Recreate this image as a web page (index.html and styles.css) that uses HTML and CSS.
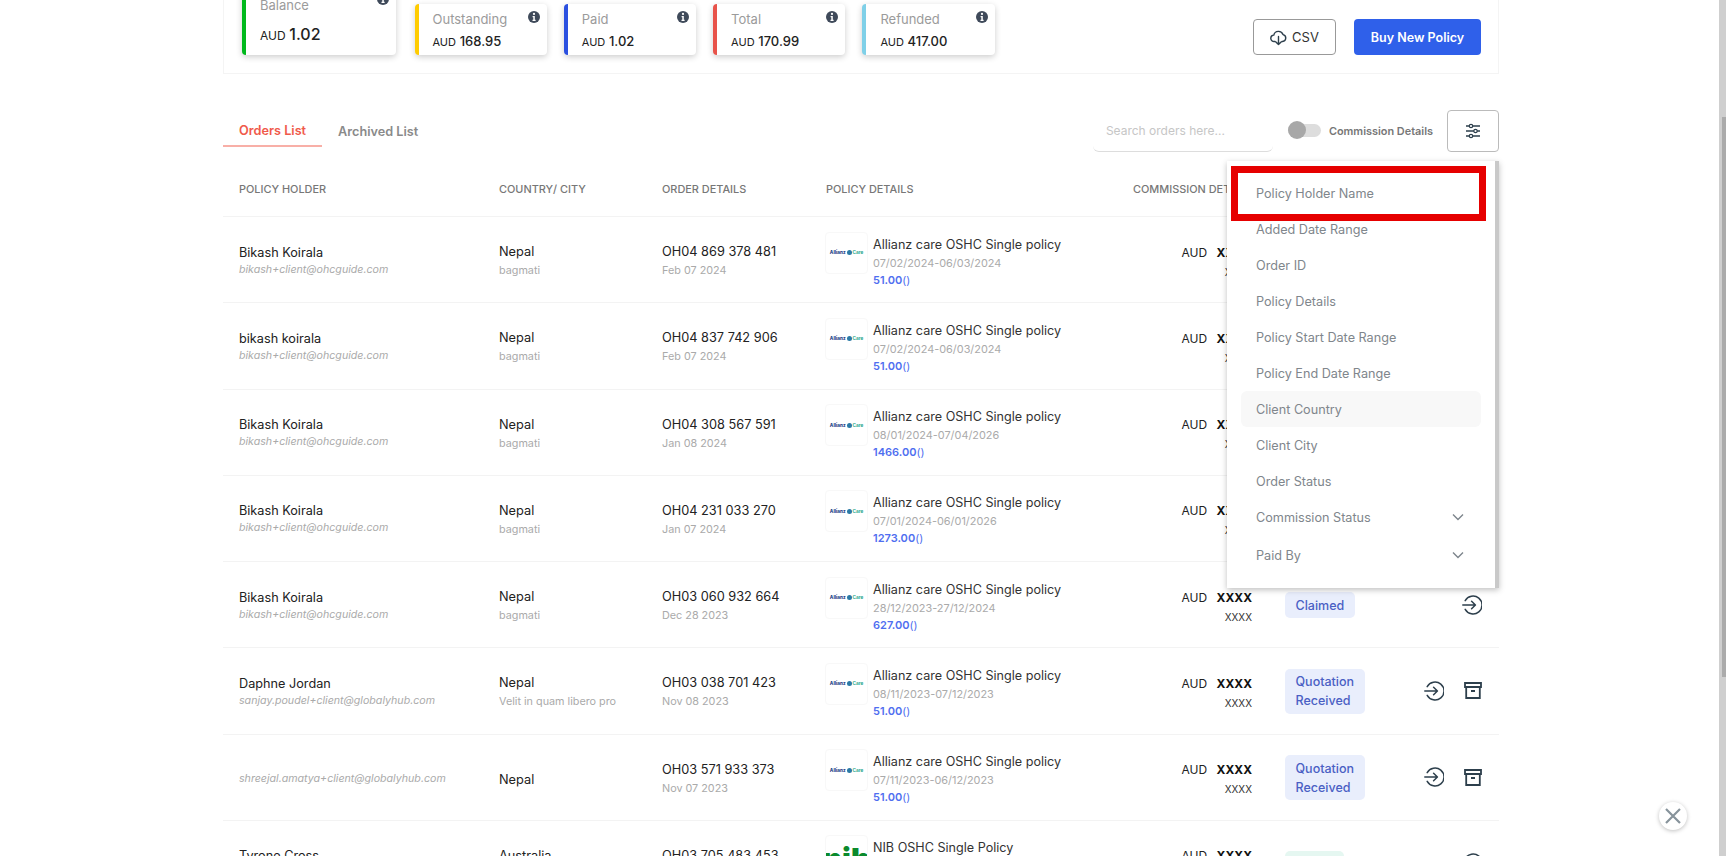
FILE: index.html
```html
<!DOCTYPE html>
<html lang="en">
<head>
<meta charset="utf-8">
<title>Orders</title>
<link rel="stylesheet" href="styles.css">
</head>
<body>
<svg class="defs" width="0" height="0" aria-hidden="true">
  <symbol id="info" viewBox="0 0 12 12"><circle cx="6" cy="6" r="6" fill="#3f4a5a"/><circle cx="6" cy="2.9" r="1.1" fill="#fff"/><path d="M4.6 5h2.2v3.7h.8V10H4.5V8.7h.8V6.2h-.7z" fill="#fff"/></symbol>
  <symbol id="enter" viewBox="0 0 20 20"><path d="M3.2 5.6A9 9 0 1 1 3.2 14.4M.8 10h12.4M9.6 6.2 13.4 10l-3.8 3.8" fill="none" stroke="#2d3f4c" stroke-width="1.5" stroke-linecap="round" stroke-linejoin="round"/></symbol>
  <symbol id="archive" viewBox="0 0 18 17"><path d="M1 1h16v4H1zM2.2 5v11h13.6V5M7 9h4" fill="none" stroke="#2d3f4c" stroke-width="1.8"/></symbol>
  <symbol id="chev" viewBox="0 0 12 8"><path d="M1 1.5 6 6.5l5-5" fill="none" stroke="#7d858c" stroke-width="1.4"/></symbol>
</svg>
<div class="page">
  <main class="content">
    <section class="summary">
      <div class="cards">
        <div class="card card-balance"><div class="card-head"><span>Balance</span><svg class="info"><use href="#info"/></svg></div><div class="card-value"><small>AUD</small> <b>1.02</b></div></div>
        <div class="card card-yellow"><div class="card-head"><span>Outstanding</span><svg class="info"><use href="#info"/></svg></div><div class="card-value"><small>AUD</small> <b>168.95</b></div></div>
        <div class="card card-blue"><div class="card-head"><span>Paid</span><svg class="info"><use href="#info"/></svg></div><div class="card-value"><small>AUD</small> <b>1.02</b></div></div>
        <div class="card card-red"><div class="card-head"><span>Total</span><svg class="info"><use href="#info"/></svg></div><div class="card-value"><small>AUD</small> <b>170.99</b></div></div>
        <div class="card card-sky"><div class="card-head"><span>Refunded</span><svg class="info"><use href="#info"/></svg></div><div class="card-value"><small>AUD</small> <b>417.00</b></div></div>
      </div>
      <div class="actions-top">
        <button class="btn btn-csv"><svg width="17" height="17" viewBox="0 0 17 17"><path d="M5 12.5H4.2A3.2 3.2 0 0 1 3.8 6.1 4.8 4.8 0 0 1 13 5.6a3.5 3.5 0 0 1-.4 6.9H12M8.5 7.500v8M5.900 13l2.600 2.600L11.100 13" fill="none" stroke="#2d3f4c" stroke-width="1.4" stroke-linecap="round" stroke-linejoin="round"/></svg>CSV</button>
        <button class="btn btn-buy">Buy New Policy</button>
      </div>
    </section>

    <section class="orders">
      <div class="toolbar">
        <div class="tabs">
          <span class="tab tab-active">Orders List</span>
          <span class="tab">Archived List</span>
        </div>
        <div class="tools">
          <div class="search">Search orders here...</div>
          <div class="toggle"><span class="knob"></span></div>
          <span class="toggle-label">Commission Details</span>
          <button class="filter-btn"><svg width="16" height="16" viewBox="0 0 16 16"><path d="M1 3h14M1 8h14M1 13h14" stroke="#2d3f4c" stroke-width="1.3"/><circle cx="6" cy="3" r="1.700" fill="#fff" stroke="#2d3f4c" stroke-width="1.2"/><circle cx="10.500" cy="8" r="1.700" fill="#fff" stroke="#2d3f4c" stroke-width="1.2"/><circle cx="6" cy="13" r="1.700" fill="#fff" stroke="#2d3f4c" stroke-width="1.2"/></svg></button>
        </div>
      </div>

      <div class="row row-head">
        <div>POLICY HOLDER</div><div>COUNTRY/ CITY</div><div>ORDER DETAILS</div><div>POLICY DETAILS</div><div class="head-commission">COMMISSION DETAILS</div><div class="cell-status">STATUS</div><div></div>
      </div>

      <div class="row">
        <div><div class="name">Bikash Koirala</div><div class="email">bikash+client@ohcguide.com</div></div>
        <div><div class="strong">Nepal</div><div class="sub">bagmati</div></div>
        <div><div class="strong">OH04 869 378 481</div><div class="sub">Feb 07 2024</div></div>
        <div class="policy"><div class="logo"><span class="az">Allianz</span><i class="az-dot"></i><span class="care">Care</span></div><div><div class="title">Allianz care OSHC Single policy</div><div class="dates">07/02/2024-06/03/2024</div><div class="price"><b>51.00</b>()</div></div></div>
        <div class="commission"><div>AUD <b>XXXX</b></div><div class="sub-x">XXXX</div></div>
        <div class="cell-status"><span class="badge">Claimed</span></div>
        <div class="cell-actions"><svg class="ic-enter"><use href="#enter"/></svg></div>
      </div>
      <div class="row">
        <div><div class="name">bikash koirala</div><div class="email">bikash+client@ohcguide.com</div></div>
        <div><div class="strong">Nepal</div><div class="sub">bagmati</div></div>
        <div><div class="strong">OH04 837 742 906</div><div class="sub">Feb 07 2024</div></div>
        <div class="policy"><div class="logo"><span class="az">Allianz</span><i class="az-dot"></i><span class="care">Care</span></div><div><div class="title">Allianz care OSHC Single policy</div><div class="dates">07/02/2024-06/03/2024</div><div class="price"><b>51.00</b>()</div></div></div>
        <div class="commission"><div>AUD <b>XXXX</b></div><div class="sub-x">XXXX</div></div>
        <div class="cell-status"><span class="badge">Claimed</span></div>
        <div class="cell-actions"><svg class="ic-enter"><use href="#enter"/></svg></div>
      </div>
      <div class="row">
        <div><div class="name">Bikash Koirala</div><div class="email">bikash+client@ohcguide.com</div></div>
        <div><div class="strong">Nepal</div><div class="sub">bagmati</div></div>
        <div><div class="strong">OH04 308 567 591</div><div class="sub">Jan 08 2024</div></div>
        <div class="policy"><div class="logo"><span class="az">Allianz</span><i class="az-dot"></i><span class="care">Care</span></div><div><div class="title">Allianz care OSHC Single policy</div><div class="dates">08/01/2024-07/04/2026</div><div class="price"><b>1466.00</b>()</div></div></div>
        <div class="commission"><div>AUD <b>XXXX</b></div><div class="sub-x">XXXX</div></div>
        <div class="cell-status"><span class="badge">Claimed</span></div>
        <div class="cell-actions"><svg class="ic-enter"><use href="#enter"/></svg></div>
      </div>
      <div class="row">
        <div><div class="name">Bikash Koirala</div><div class="email">bikash+client@ohcguide.com</div></div>
        <div><div class="strong">Nepal</div><div class="sub">bagmati</div></div>
        <div><div class="strong">OH04 231 033 270</div><div class="sub">Jan 07 2024</div></div>
        <div class="policy"><div class="logo"><span class="az">Allianz</span><i class="az-dot"></i><span class="care">Care</span></div><div><div class="title">Allianz care OSHC Single policy</div><div class="dates">07/01/2024-06/01/2026</div><div class="price"><b>1273.00</b>()</div></div></div>
        <div class="commission"><div>AUD <b>XXXX</b></div><div class="sub-x">XXXX</div></div>
        <div class="cell-status"><span class="badge">Claimed</span></div>
        <div class="cell-actions"><svg class="ic-enter"><use href="#enter"/></svg></div>
      </div>
      <div class="row">
        <div><div class="name">Bikash Koirala</div><div class="email">bikash+client@ohcguide.com</div></div>
        <div><div class="strong">Nepal</div><div class="sub">bagmati</div></div>
        <div><div class="strong">OH03 060 932 664</div><div class="sub">Dec 28 2023</div></div>
        <div class="policy"><div class="logo"><span class="az">Allianz</span><i class="az-dot"></i><span class="care">Care</span></div><div><div class="title">Allianz care OSHC Single policy</div><div class="dates">28/12/2023-27/12/2024</div><div class="price"><b>627.00</b>()</div></div></div>
        <div class="commission"><div>AUD <b>XXXX</b></div><div class="sub-x">XXXX</div></div>
        <div class="cell-status"><span class="badge">Claimed</span></div>
        <div class="cell-actions"><svg class="ic-enter"><use href="#enter"/></svg></div>
      </div>
      <div class="row">
        <div><div class="name">Daphne Jordan</div><div class="email">sanjay.poudel+client@globalyhub.com</div></div>
        <div><div class="strong">Nepal</div><div class="sub">Velit in quam libero pro</div></div>
        <div><div class="strong">OH03 038 701 423</div><div class="sub">Nov 08 2023</div></div>
        <div class="policy"><div class="logo"><span class="az">Allianz</span><i class="az-dot"></i><span class="care">Care</span></div><div><div class="title">Allianz care OSHC Single policy</div><div class="dates">08/11/2023-07/12/2023</div><div class="price"><b>51.00</b>()</div></div></div>
        <div class="commission"><div>AUD <b>XXXX</b></div><div class="sub-x">XXXX</div></div>
        <div class="cell-status"><span class="badge">Quotation<br>Received</span></div>
        <div class="cell-actions"><svg class="ic-enter"><use href="#enter"/></svg><svg class="ic-archive"><use href="#archive"/></svg></div>
      </div>
      <div class="row">
        <div><div class="email">shreejal.amatya+client@globalyhub.com</div></div>
        <div><div class="strong">Nepal</div></div>
        <div><div class="strong">OH03 571 933 373</div><div class="sub">Nov 07 2023</div></div>
        <div class="policy"><div class="logo"><span class="az">Allianz</span><i class="az-dot"></i><span class="care">Care</span></div><div><div class="title">Allianz care OSHC Single policy</div><div class="dates">07/11/2023-06/12/2023</div><div class="price"><b>51.00</b>()</div></div></div>
        <div class="commission"><div>AUD <b>XXXX</b></div><div class="sub-x">XXXX</div></div>
        <div class="cell-status"><span class="badge">Quotation<br>Received</span></div>
        <div class="cell-actions"><svg class="ic-enter"><use href="#enter"/></svg><svg class="ic-archive"><use href="#archive"/></svg></div>
      </div>
      <div class="row">
        <div><div class="name">Tyrone Cross</div><div class="email">tyrone.cross+client@globalyhub.com</div></div>
        <div><div class="strong">Australia</div><div class="sub">Sydney</div></div>
        <div><div class="strong">OH03 705 483 453</div><div class="sub">Nov 02 2023</div></div>
        <div class="policy"><div class="logo"><span class="nib">nib</span></div><div><div class="title">NIB OSHC Single Policy</div><div class="dates">02/11/2023-01/12/2023</div><div class="price"><b>51.00</b>()</div></div></div>
        <div class="commission"><div>AUD <b>XXXX</b></div><div class="sub-x">XXXX</div></div>
        <div class="cell-status"><span class="badge badge-green">Active</span></div>
        <div class="cell-actions"><svg class="ic-enter"><use href="#enter"/></svg></div>
      </div>

      <div class="filter-menu">
        <div class="menu-item">Policy Holder Name</div>
        <div class="menu-item">Added Date Range</div>
        <div class="menu-item">Order ID</div>
        <div class="menu-item">Policy Details</div>
        <div class="menu-item">Policy Start Date Range</div>
        <div class="menu-item">Policy End Date Range</div>
        <div class="menu-item menu-hover">Client Country</div>
        <div class="menu-item">Client City</div>
        <div class="menu-item">Order Status</div>
        <div class="menu-item menu-expand">Commission Status<svg class="chev"><use href="#chev"/></svg></div>
        <div class="menu-item menu-expand menu-last">Paid By<svg class="chev"><use href="#chev"/></svg></div>
        <div class="highlight-box"></div>
      </div>
    </section>
  </main>
  <aside class="scrollbar"><div class="scroll-thumb"></div></aside>
  <button class="close-btn"><svg width="18" height="18" viewBox="0 0 18 18"><path d="M2 2l14 14M16 2 2 16" stroke="#87939b" stroke-width="2.2"/></svg></button>
</div>
</body>
</html>
```
FILE: styles.css
```css
* { box-sizing: border-box; }
html, body { margin: 0; height: 100%; overflow: hidden; background: #fff; }
body { font-family: Inter, "Liberation Sans", sans-serif; color: #222; font-size: 13px; }
.defs { position: absolute; }
button { font-family: inherit; cursor: pointer; }

.page { display: flex; height: 856px; overflow: hidden; position: relative; }
.content { flex: 1; padding-left: 223px; padding-right: 220px; min-width: 0; }

.summary { margin-top: -20px; height: 94px; padding: 0 17px 18px 18px; border: 1px solid #f4f4f4; border-top: 0; display: flex; justify-content: space-between; align-items: flex-end; }
.cards { display: flex; align-items: flex-end; gap: 17px; }
.card { width: 132.3px; height: 51px; padding: 5px 7px 0 14px; background: #fff; border-left: 4px solid #ccc; border-radius: 4px; box-shadow: 0 2px 6px rgba(0,0,0,.2); }
.card-balance { width: 154px; height: 70px; margin-right: 1.5px; border-left-color: #00b81c; padding-top: 10px; padding-left: 14px; }
.card-yellow { border-left-color: #ffcc00; }
.card-blue { border-left-color: #2b50e0; }
.card-red { border-left-color: #e8534a; }
.card-sky { border-left-color: #7fd0e8; }
.card-head { display: flex; justify-content: space-between; color: #9b9b9b; font-size: 13px; line-height: 20px; }
.info { width: 12px; height: 12px; margin-top: 2px; }
.card-value { margin-top: 2px; line-height: 20px; font-size: 13px; color: #222; }
.card-value small { font-size: 11px; }
.card-value b { font-weight: 500; }
.card-balance .card-value { margin-top: 9px; }
.card-balance .card-value small { font-size: 12px; }
.card-balance .card-value b { font-size: 16px; }
.card-balance .info { margin-top: -2px; }

.actions-top { display: flex; gap: 18px; }
.btn { height: 36px; border-radius: 4px; font-size: 13px; display: flex; align-items: center; justify-content: center; }
.btn-csv { width: 83px; gap: 5px; background: #fff; border: 1px solid #999; color: #333; }
.btn-buy { width: 127px; background: #2f60ea; border: 0; color: #fff; font-weight: 600; font-size: 12.5px; }

.orders { position: relative; margin-top: 36px; }
.toolbar { display: flex; justify-content: space-between; height: 42px; }
.tabs { display: flex; align-items: flex-start; }
.tab { padding: 0 16px 5px; line-height: 20px; height: 37px; display: flex; align-items: flex-end; color: #8a8a8a; font-weight: 600; font-size: 12.7px; }
.tab-active { color: #f05a4b; padding-bottom: 4px; border-bottom: 2px solid #f8afa7; }
.tools { display: flex; align-items: center; }
.search { width: 180px; height: 41px; padding-left: 13px; line-height: 40px; color: #c6c6c6; font-size: 12px; border-bottom: 1px solid #ddd; border-radius: 6px; }
.toggle { margin-left: 15px; margin-top: -2px; width: 33px; height: 13px; background: #ddd; border-radius: 7px; position: relative; }
.knob { position: absolute; left: 0; top: -3px; width: 18px; height: 18px; border-radius: 50%; background: #a8a8a8; }
.toggle-label { margin-left: 8px; font-size: 10.9px; font-weight: 600; color: #777; white-space: nowrap; }
.filter-btn { margin-left: 14px; width: 52px; height: 42px; background: #fff; border: 1px solid #bbb; border-radius: 4px; display: flex; align-items: center; justify-content: center; padding: 0; }

.row { display: grid; grid-template-columns: 260px 163px 164px 307px 119px 120px 1fr; padding: 2px 17px 0 16px; height: 86.25px; align-items: center; border-bottom: 1px solid #f3f3f3; }
.row-head { height: 65px; padding-top: 9px; font-size: 10.9px; font-weight: 500; color: #777; white-space: nowrap; }
.head-commission { white-space: nowrap; }
.name { font-size: 12.7px; line-height: 17px; color: #222; }
.email { font-size: 10.65px; line-height: 17px; font-style: italic; color: #aaa; white-space: nowrap; }
.strong { font-size: 12.75px; padding-top: 3px; line-height: 18px; color: #222; }
.sub { font-size: 10.8px; line-height: 20px; color: #aaa; }
.policy { display: flex; gap: 5px; align-items: flex-start; margin-top: -2px; }
.logo { width: 43px; height: 42px; margin-left: -1px; flex: none; border: 1px solid #f8f8f8; border-radius: 4px; display: flex; align-items: center; justify-content: center; gap: 1px; overflow: hidden; }
.az { font-size: 4.6px; font-weight: 800; color: #1f3f86; }
.care { font-size: 4.6px; font-weight: 700; color: #1fa58a; }
.az-dot { width: 5px; height: 5px; border-radius: 50%; background: #2b7aa6; }
.nib { font-size: 30px; font-weight: 900; color: #0b8a2c; line-height: 42px; margin-top: 6px; }
.title { font-size: 12.6px; line-height: 20px; color: #333; margin-top: 3px; white-space: nowrap; }
.dates { font-size: 10.9px; line-height: 17px; color: #aaa; }
.price { font-size: 11px; line-height: 16px; color: #4f6ef0; }
.price b { font-weight: 600; }
.commission { text-align: right; font-size: 12px; line-height: 20px; color: #222; margin-top: 2px; }
.commission b { font-weight: 700; margin-left: 6px; color: #111; }
.sub-x { font-size: 10px; line-height: 18px; color: #333; }
.cell-status { padding-left: 33px; margin-top: -1px; }
.badge { display: inline-block; padding: 3.5px 10.5px; line-height: 19px; font-weight: 500; font-size: 12.5px; color: #4a60c4; background: #e9eefc; border-radius: 5px; }
.badge-green { background: #e5f7f1; color: #1c9c72; }
.cell-actions { display: flex; justify-content: flex-end; align-items: center; gap: 20px; margin-top: -2px; }
.ic-enter { width: 20px; height: 20px; }
.ic-archive { width: 18px; height: 17px; }

.filter-menu { position: absolute; left: 1004px; top: 51px; width: 272px; height: 427px; padding: 14px 14px 0; background: #fff; border-right: 4px solid #c9c9c9; box-shadow: 0 2px 6px rgba(0,0,0,.25); z-index: 5; }
.menu-item { height: 36px; padding-left: 15px; display: flex; align-items: center; font-size: 12.65px; color: #80868c; border-radius: 6px; }
.menu-hover { background: #f8f8f8; }
.menu-expand { justify-content: space-between; padding-right: 17px; }
.menu-last { margin-top: 2px; }
.chev { width: 12px; height: 8px; }
.highlight-box { position: absolute; left: 4px; top: 5px; width: 255px; height: 55px; border: 7px solid #e60000; }

.scrollbar { width: 7px; flex: none; background: #cfcfcf; }
.scroll-thumb { margin-left: 3px; margin-top: 117px; height: 560px; background: #ababab; }
.close-btn { position: absolute; left: 1659px; top: 802px; width: 28px; height: 28px; padding: 0; border: 0; border-radius: 50%; background: #fff; box-shadow: 0 1px 4px rgba(0,0,0,.25); display: flex; align-items: center; justify-content: center; }
```
